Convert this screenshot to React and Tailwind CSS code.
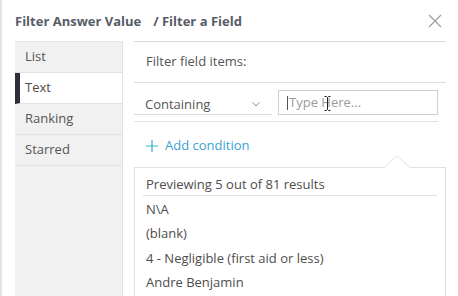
import React from 'react';

const tabs = ['List', 'Text', 'Ranking', 'Starred'];
const preview = ['N\\A', '(blank)', '4 - Negligible (first aid or less)', 'Andre Benjamin'];

const App = () => {
  return (
    <div className="w-[458px] h-[296px] bg-white overflow-hidden border-l-2 border-[#e4e4e4] font-['Open_Sans',sans-serif] text-[#555]">
      {/* header */}
      <div className="h-[41px] flex items-center pl-[13px] pr-[16px] pt-[3px]">
        <span className="text-[13px] font-bold text-[#575c66]">Filter Answer Value</span>
        <span className="text-[13px] font-bold text-[#575c66] ml-[12px]">/ Filter a Field</span>
        <svg className="ml-auto mt-[-3px]" width="14" height="14" viewBox="0 0 14 14">
          <path d="M1 1 L13 13 M13 1 L1 13" stroke="#9a9a9a" strokeWidth="1.1" fill="none" />
        </svg>
      </div>

      <div className="flex">
        {/* sidebar */}
        <div className="w-[108px] ml-[13px] h-[255px] bg-[#f1f1f1] border-r border-[#e2e2e2] border-t border-t-[#e6e6e6]">
          {tabs.map((t) => (
            <div
              key={t}
              className={`h-[31px] flex items-center text-[13px] border-b border-[#e2e2e2] ${t === 'Text' ? 'bg-white border-l-[5px] border-l-[#2d3038] pl-[5px] text-[#4d4d4d]' : 'pl-[10px] text-[#555]'}`}
            >
              {t}
            </div>
          ))}
        </div>

        {/* content */}
        <div className="ml-[11px] w-[312px] border-t border-[#d9d9d9]">
          <div className="h-[41px] flex items-center pl-[12px] text-[13px] border-b border-[#dedede]">
            Filter field items:
          </div>

          <div className="flex items-end w-[304px] pt-[6px] pb-[6px] border-b border-[#e2e2e2]">
            <div className="w-[138px] h-[26px] flex items-center pl-[11px] pr-[12px] border-b border-[#dcdcdc] text-[13px]">
              <span className="pt-[7px]">Containing</span>
              <svg className="ml-auto mt-[6px]" width="8" height="5" viewBox="0 0 8 5">
                <path d="M0.5 0.5 L4 4 L7.5 0.5" stroke="#8a8a8a" strokeWidth="1" fill="none" />
              </svg>
            </div>
            <div className="ml-[6px] w-[160px] h-[25px] border border-[#cfcfcf] flex items-center pl-[8px] relative">
              <span className="w-px h-[14px] bg-[#555] mr-[1px]"></span>
              <span className="text-[13px] text-[#9b9b9b]">Type Here...</span>
              <svg className="absolute left-[45px] top-[5px]" width="7" height="15" viewBox="0 0 7 15">
                <path d="M0.5 0.5 H2.5 L3.5 1.5 L4.5 0.5 H6.5 M3.5 1.5 V13.5 M0.5 14.5 H2.5 L3.5 13.5 L4.5 14.5 H6.5" stroke="#222" strokeWidth="1" fill="none" />
              </svg>
            </div>
          </div>

          <div className="h-[34px] flex items-center pl-[12px] pt-[13px]">
            <svg width="12" height="12" viewBox="0 0 12 12">
              <path d="M6 0 V12 M0 6 H12" stroke="#2bb1c6" strokeWidth="1.2" fill="none" />
            </svg>
            <span className="ml-[7px] text-[13px] text-[#3da2d6]">Add condition</span>
          </div>

          {/* preview */}
          <div className="relative mt-[11px] h-[140px] border border-[#e0e0e0] border-b-0 bg-white">
            <svg className="absolute left-[248px] top-[-13px]" width="28" height="14" viewBox="0 0 28 14">
              <path d="M0 13.5 L14 0.8 L28 13.5" stroke="#e0e0e0" strokeWidth="1" fill="white" />
            </svg>
            <div className="mx-[8px] h-[28px] flex items-center pl-[3px] pt-[6px] border-b border-[#e0e0e0] text-[13px] text-[#4d4d4d]">
              Previewing 5 out of 81 results
            </div>
            <div className="pl-[11px] pt-[1px]">
              {preview.map((p) => (
                <div key={p} className="h-[24.5px] flex items-center text-[13px] text-[#4d4d4d]">
                  {p}
                </div>
              ))}
            </div>
          </div>
        </div>
      </div>
    </div>
  );
};

export default App;
